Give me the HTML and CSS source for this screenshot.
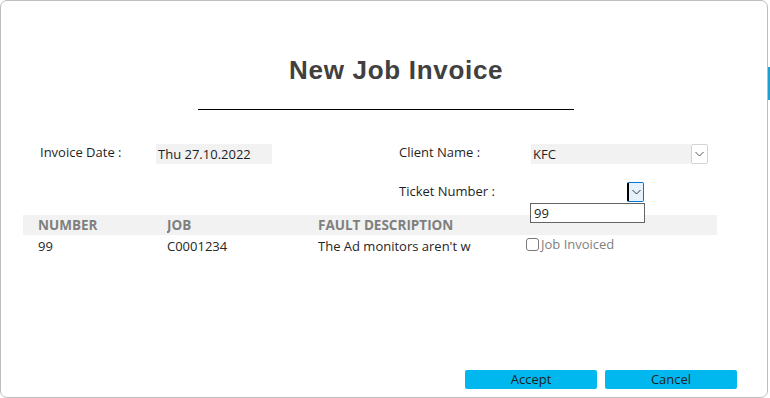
FILE: index.html
```html
<!DOCTYPE html>
<html lang="en">
<head>
  <meta charset="UTF-8">
  <title>New Job Invoice</title>
  <link rel="stylesheet" href="styles.css">
</head>
<body>
  <div class="backdrop">
    <div class="dialog">
      <h1 class="title">New Job Invoice</h1>
      <hr class="rule">

      <div class="form">
        <div class="field-row">
          <label class="label label-left">Invoice Date :</label>
          <div class="box date-box">Thu 27.10.2022</div>
          <label class="label label-right">Client Name :</label>
          <div class="combo">
            <div class="box client-box">KFC</div>
            <div class="drop-btn">
              <svg width="9" height="6" viewBox="0 0 9 6"><path d="M0.5 1 L4.5 5 L8.5 1" fill="none" stroke="#555" stroke-width="1"/></svg>
            </div>
          </div>
        </div>

        <div class="field-row ticket-row">
          <span class="spacer"></span>
          <label class="label label-right">Ticket Number :</label>
          <div class="ticket-combo">
            <div class="drop-btn active">
              <svg width="9" height="6" viewBox="0 0 9 6"><path d="M0.5 1 L4.5 5 L8.5 1" fill="none" stroke="#333" stroke-width="1"/></svg>
            </div>
            <div class="drop-list">99</div>
          </div>
        </div>
      </div>

      <div class="table">
        <div class="table-head">
          <span class="col col-num">NUMBER</span>
          <span class="col col-job">JOB</span>
          <span class="col col-desc">FAULT DESCRIPTION</span>
        </div>
        <div class="table-row">
          <span class="col col-num">99</span>
          <span class="col col-job">C0001234</span>
          <span class="col col-desc">The Ad monitors aren't w</span>
          <label class="check"><span class="check-box"></span>Job Invoiced</label>
        </div>
      </div>

      <div class="actions">
        <button class="btn">Accept</button>
        <button class="btn">Cancel</button>
      </div>
    </div>
  </div>
</body>
</html>
```

FILE: styles.css
```css
body {
  margin: 0;
  background: #ffffff;
  font-family: "Open Sans", "Noto Sans", Arial, sans-serif;
  color: #262626;
}

.backdrop {
  width: 770px;
  height: 398px;
  background: linear-gradient(to bottom, #ffffff 67px, #1e9fd0 67px, #1e9fd0 100px, #ffffff 100px);
}

.dialog {
  box-sizing: border-box;
  width: 768px;
  height: 398px;
  background: #ffffff;
  border: 1px solid #bdbdbd;
  border-radius: 7px;
  display: flex;
  flex-direction: column;
}

.title {
  margin: 52px 0 0 288px;
  font-family: "Liberation Sans", Arial, sans-serif;
  font-size: 26px;
  font-weight: bold;
  letter-spacing: 0.7px;
  color: #404040;
  line-height: 34px;
}

.rule {
  margin: 22px 0 0 197px;
  width: 376px;
  height: 0;
  border: 0;
  border-top: 1px solid #000000;
}

.form {
  margin-top: 34px;
  padding-left: 39px;
  font-size: 13px;
}

.field-row {
  display: flex;
  align-items: center;
  height: 20px;
}

.label {
  color: #1f1f1f;
  margin-top: -4px;
}

.label-left {
  width: 116px;
}

.label-right {
  width: 132px;
}

.box {
  box-sizing: border-box;
  height: 20px;
  line-height: 20px;
  background: #f2f2f2;
  padding-left: 2px;
  color: #1f1f1f;
}

.date-box {
  width: 116px;
  margin-right: 127px;
}

.combo {
  display: flex;
}

.client-box {
  width: 160px;
}

.drop-btn {
  box-sizing: border-box;
  width: 17px;
  height: 20px;
  border: 1px solid #d4d4d4;
  border-radius: 2px;
  background: #ffffff;
  display: flex;
  align-items: center;
  justify-content: center;
}

.ticket-row {
  margin-top: 18px;
}

.ticket-row .label {
  margin-top: -2px;
}

.spacer {
  width: 359px;
}

.ticket-combo {
  position: relative;
  margin-left: 96px;
  height: 20px;
}

.drop-btn.active {
  border: 1px solid #0078d7;
  border-left: 2px solid #000000;
  background: #e5f1fb;
}

.drop-list {
  position: absolute;
  z-index: 2;
  left: -97px;
  top: 21px;
  box-sizing: border-box;
  width: 115px;
  height: 20px;
  line-height: 18px;
  padding-left: 3px;
  border: 1px solid #646464;
  background: #ffffff;
  color: #1f1f1f;
}

.table {
  margin: 13px 0 0 22px;
  width: 694px;
  font-size: 13px;
}

.table-head {
  display: flex;
  height: 20px;
  line-height: 20px;
  background: #f2f2f2;
  font-size: 13.5px;
  font-weight: bold;
  color: #7f7f7f;
}

.table-row {
  display: flex;
  align-items: center;
  height: 20px;
  margin-top: 1px;
}

.col {
  overflow: hidden;
  white-space: nowrap;
}

.col-num {
  width: 129px;
  padding-left: 15px;
}

.col-job {
  width: 151px;
}

.col-desc {
  width: 160px;
}

.table-row .col-desc {
  margin-right: 48px;
}

.check {
  display: flex;
  align-items: center;
  color: #7f7f7f;
  margin-top: -4px;
}

.check-box {
  box-sizing: border-box;
  width: 13px;
  height: 13px;
  border: 1px solid #7a7a7a;
  border-radius: 3px;
  margin: 0 2px 0 0;
}

.actions {
  margin-top: auto;
  margin-bottom: 8px;
  display: flex;
  justify-content: flex-end;
  gap: 8px;
  padding-right: 30px;
}

.btn {
  width: 132px;
  height: 19px;
  padding: 0;
  border: 0;
  border-radius: 2px;
  background: #00b7ee;
  font-family: "Open Sans", "Noto Sans", Arial, sans-serif;
  font-size: 13px;
  line-height: 19px;
  color: #1f1f1f;
}
```
